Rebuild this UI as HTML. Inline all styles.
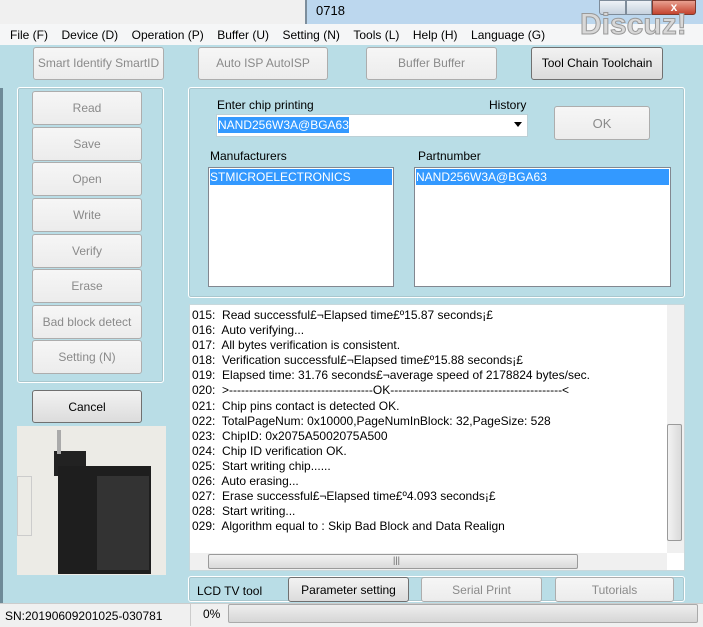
<!DOCTYPE html><html><head><meta charset="utf-8"><style>
*{margin:0;padding:0;box-sizing:border-box}
body{width:703px;height:627px;overflow:hidden;position:relative;font-family:"Liberation Sans",sans-serif;font-size:12px;background:#b9dde6;color:#000}
.a{position:absolute}
.btn{position:absolute;background:linear-gradient(#f6f6f6,#ececec);border:1px solid #adadad;border-radius:3px;color:#8a8a8a;text-align:center;font-size:12px}
.btn.on{color:#000;background:linear-gradient(#f2f2f2,#dcdcdc);border-color:#707070}
.grp{position:absolute;border:1px solid #fff;border-radius:3px;box-shadow:inset 0 0 0 1px #a9c7ce}
.sel{background:#3399ff;color:#fff}
.log div{height:15.1px;line-height:15px;white-space:pre}
.m span{margin-right:13.5px}
</style></head><body>
<div class="a" style="left:0;top:0;width:305px;height:24px;background:#f0f0f0"></div>
<div class="a" style="left:305px;top:0;width:398px;height:24px;background:#bcd7ee;border-left:2px solid #7d8e9c"></div>
<div class="a" style="left:316px;top:3px;font-size:13px">0718</div>
<div class="a" style="left:599px;top:0;width:27px;height:15px;background:linear-gradient(#eef2f7,#c6d2de);border:1px solid #7e8c9a;border-radius:0 0 0 3px"></div>
<div class="a" style="left:626px;top:0;width:26px;height:15px;background:linear-gradient(#eef2f7,#c6d2de);border:1px solid #7e8c9a"></div>
<div class="a" style="left:652px;top:0;width:44px;height:15px;background:linear-gradient(#e8a090,#c4432e);border:1px solid #7e3a2e;border-radius:0 0 3px 0;color:#fff;text-align:center;font-weight:bold;line-height:13px">x</div>
<div class="a" style="left:0;top:24px;width:703px;height:21px;background:#f5f6f7"></div>
<div class="a m" style="left:10px;top:28px;font-size:12px;white-space:nowrap"><span>File (F)</span><span>Device (D)</span><span>Operation (P)</span><span>Buffer (U)</span><span>Setting (N)</span><span>Tools (L)</span><span>Help (H)</span><span>Language (G)</span></div>
<div class="a" style="left:580px;top:8px;font-size:30px;font-weight:bold;color:#d8d8d8;-webkit-text-stroke:1px #999">Discuz!</div>
<div class="a" style="left:0;top:88px;width:3px;height:539px;background:#6e8a98"></div>

<div class="btn" style="left:33px;top:47px;width:131px;height:33px;line-height:31px">Smart Identify SmartID</div>
<div class="btn" style="left:198px;top:47px;width:130px;height:33px;line-height:31px">Auto ISP AutoISP</div>
<div class="btn" style="left:366px;top:47px;width:131px;height:33px;line-height:31px">Buffer Buffer</div>
<div class="btn on" style="left:531px;top:47px;width:132px;height:33px;line-height:31px">Tool Chain Toolchain</div>

<div class="grp" style="left:17px;top:87px;width:147px;height:296px"></div>
<div class="btn" style="left:32px;top:91px;width:110px;height:34px;line-height:33px">Read</div>
<div class="btn" style="left:32px;top:127px;width:110px;height:34px;line-height:33px">Save</div>
<div class="btn" style="left:32px;top:162px;width:110px;height:34px;line-height:33px">Open</div>
<div class="btn" style="left:32px;top:198px;width:110px;height:34px;line-height:33px">Write</div>
<div class="btn" style="left:32px;top:234px;width:110px;height:34px;line-height:33px">Verify</div>
<div class="btn" style="left:32px;top:269px;width:110px;height:34px;line-height:33px">Erase</div>
<div class="btn" style="left:32px;top:305px;width:110px;height:34px;line-height:33px">Bad block detect</div>
<div class="btn" style="left:32px;top:340px;width:110px;height:34px;line-height:33px">Setting (N)</div>
<div class="btn on" style="left:32px;top:390px;width:110px;height:33px;line-height:32px;font-size:12px">Cancel</div>

<div class="a" style="left:17px;top:426px;width:149px;height:149px;background:#ecebe6">
 <div class="a" style="left:37px;top:25px;width:32px;height:25px;background:#222"></div>
 <div class="a" style="left:40px;top:4px;width:4px;height:24px;background:#aaa"></div>
 <div class="a" style="left:41px;top:40px;width:93px;height:108px;background:#1e1e1e"></div>
 <div class="a" style="left:80px;top:50px;width:52px;height:94px;background:#333"></div>
 <div class="a" style="left:0;top:50px;width:15px;height:60px;border:1px solid #ccc"></div>
</div>

<div class="grp" style="left:188px;top:87px;width:497px;height:211px"></div>
<div class="a" style="left:217px;top:98px">Enter chip printing</div>
<div class="a" style="left:489px;top:98px">History</div>
<div class="a" style="left:216px;top:114px;width:312px;height:23px;background:#fff;border:1px solid #bcd0d6"></div>
<div class="a sel" style="left:218px;top:117px;width:131px;height:16px;line-height:16px;font-size:12px;white-space:nowrap">NAND256W3A@BGA63</div>
<div class="a" style="left:514px;top:122px;width:0;height:0;border-left:4px solid transparent;border-right:4px solid transparent;border-top:5px solid #000"></div>
<div class="btn" style="left:554px;top:106px;width:96px;height:34px;line-height:33px;font-size:13px">OK</div>
<div class="a" style="left:210px;top:149px">Manufacturers</div>
<div class="a" style="left:418px;top:149px">Partnumber</div>
<div class="a" style="left:208px;top:167px;width:186px;height:120px;background:#fff;border:1px solid #828790"></div>
<div class="a sel" style="left:210px;top:169px;width:182px;height:16px;line-height:17px">STMICROELECTRONICS</div>
<div class="a" style="left:414px;top:167px;width:257px;height:120px;background:#fff;border:1px solid #828790"></div>
<div class="a sel" style="left:416px;top:169px;width:253px;height:16px;line-height:17px">NAND256W3A@BGA63</div>

<div class="a" style="left:189px;top:304px;width:496px;height:267px;background:#fff;border:1px solid #c8d8dc"></div>
<div class="a log" style="left:192px;top:308px">
<div>015:  Read successful£¬Elapsed time£º15.87 seconds¡£</div>
<div>016:  Auto verifying...</div>
<div>017:  All bytes verification is consistent.</div>
<div>018:  Verification successful£¬Elapsed time£º15.88 seconds¡£</div>
<div>019:  Elapsed time: 31.76 seconds£¬average speed of 2178824 bytes/sec.</div>
<div>020:  &gt;------------------------------------OK-------------------------------------------&lt;</div>
<div>021:  Chip pins contact is detected OK.</div>
<div>022:  TotalPageNum: 0x10000,PageNumInBlock: 32,PageSize: 528</div>
<div>023:  ChipID: 0x2075A5002075A500</div>
<div>024:  Chip ID verification OK.</div>
<div>025:  Start writing chip......</div>
<div>026:  Auto erasing...</div>
<div>027:  Erase successful£¬Elapsed time£º4.093 seconds¡£</div>
<div>028:  Start writing...</div>
<div>029:  Algorithm equal to : Skip Bad Block and Data Realign</div>
</div>
<div class="a" style="left:667px;top:305px;width:17px;height:248px;background:#f0f0f0"></div>
<div class="a" style="left:667px;top:424px;width:15px;height:117px;background:linear-gradient(90deg,#f2f2f2,#dadada);border:1px solid #9a9a9a;border-radius:2px"></div>
<div class="a" style="left:190px;top:553px;width:477px;height:17px;background:#f0f0f0"></div>
<div class="a" style="left:208px;top:554px;width:370px;height:15px;background:linear-gradient(#f2f2f2,#dadada);border:1px solid #9a9a9a;border-radius:2px"></div>
<div class="a" style="left:393px;top:555px;font-size:9px;color:#666">|||</div>

<div class="grp" style="left:188px;top:576px;width:497px;height:26px"></div>
<div class="a" style="left:197px;top:584px">LCD TV tool</div>
<div class="btn on" style="left:288px;top:577px;width:121px;height:25px;line-height:24px;font-size:12px">Parameter setting</div>
<div class="btn" style="left:421px;top:577px;width:121px;height:25px;line-height:24px">Serial Print</div>
<div class="btn" style="left:555px;top:577px;width:119px;height:25px;line-height:24px">Tutorials</div>

<div class="a" style="left:0;top:603px;width:703px;height:24px;background:#f0f0f0;border-top:1px solid #ccc"></div>
<div class="a" style="left:5px;top:609px">SN:20190609201025-030781</div>
<div class="a" style="left:190px;top:604px;width:1px;height:22px;background:#ccc"></div>
<div class="a" style="left:203px;top:607px">0%</div>
<div class="a" style="left:228px;top:604px;width:470px;height:19px;background:linear-gradient(#eee,#d6d6d6);border:1px solid #aaa;border-radius:2px"></div>
</body></html>
